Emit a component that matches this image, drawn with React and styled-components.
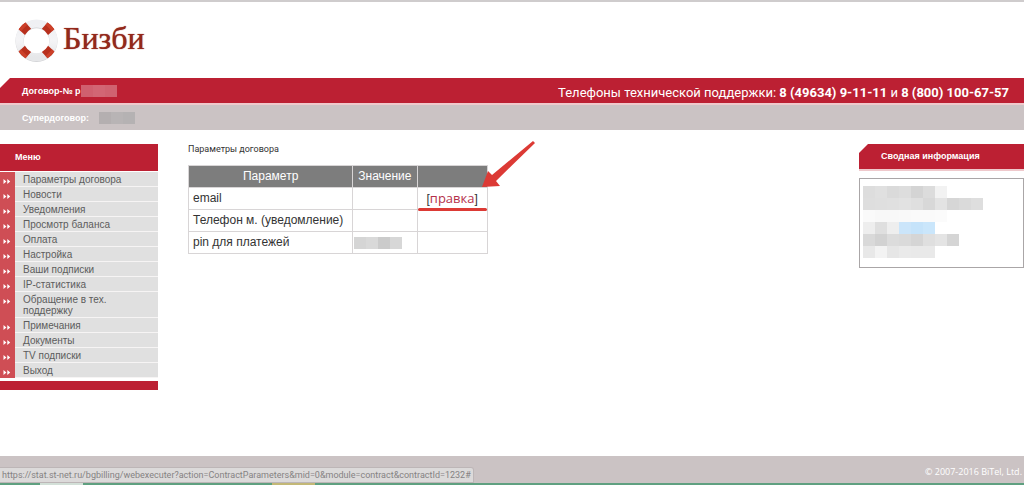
import React from 'react';
import styled, { createGlobalStyle, ThemeProvider } from 'styled-components';

const theme = {
    colors: {
        red: '#bc2033',
        redLight: '#cf4e55',
        pink: '#efc9cc',
        taupe: '#cbc3c4',
        item: '#e0e0e0',
        tableHead: '#7d7d7d',
        border: '#d8d5d6',
        mark: '#dc3a35',
        green: '#5fa080',
    },
    fonts: {
        base: '"Liberation Sans", Arial, sans-serif',
        small: 'Roboto, "Liberation Sans", sans-serif',
        logo: '"Liberation Serif", "Times New Roman", serif',
        wide: '"Open Sans", "Noto Sans", sans-serif',
    },
};

const GlobalStyle = createGlobalStyle`
  * {
    box-sizing: border-box;
  }

  body {
    margin: 0;
    background: white;
    color: #333;
    font-family: ${props => props.theme.fonts.base};
    font-size: 14px;
  }
`;

const Page = styled.div`
  display: flex;
  flex-direction: column;
  min-height: 100vh;
`;

const Header = styled.header`
  display: flex;
  align-items: center;
  height: 78px;
  padding: 0 14px;
  border-top: 2px solid #cfcccd;
`;

const Logo = styled.a`
  display: flex;
  align-items: center;
  gap: 4px;
  color: #93281a;
  font-family: ${props => props.theme.fonts.logo};
  font-size: 32px;
  line-height: 40px;
  text-decoration: none;
  text-shadow: 0 0 1px #93281a;
`;

const LogoText = styled.span`
  padding-bottom: 4px;
`;

const TopBar = styled.div`
  display: flex;
  align-items: center;
  justify-content: space-between;
  height: 25px;
  padding: 0 15px 0 22px;
  background: ${props => props.theme.colors.red};
  clip-path: polygon(10px 0, 100% 0, 100% 100%, 0 100%, 0 10px);
  color: white;
`;

const SubBar = styled.div`
  display: flex;
  align-items: center;
  height: 27px;
  padding: 0 22px;
  background: ${props => props.theme.colors.taupe};
  border-top: 2px solid ${props => props.theme.colors.pink};
  color: white;
`;

const BarLabel = styled.div`
  display: flex;
  align-items: center;
  gap: ${props => props.$gap || '0'};
  font-size: 9px;
  font-weight: bold;
`;

const Phones = styled.div`
  padding-top: 4px;
  font-family: ${props => props.theme.fonts.small};
  font-size: 13px;
`;

const Mosaic = styled.span`
  display: flex;
  flex-direction: column;
`;

const MosaicRow = styled.span`
  display: flex;
`;

const MosaicCell = styled.span`
  width: 12px;
  height: 12px;
  background: ${props => props.$color};
`;

const Content = styled.div`
  display: grid;
  grid-template-columns: 158px 1fr 165px;
  gap: 30px;
  align-items: start;
  flex: 1;
  padding: 14px 0;
`;

const Menu = styled.nav`
  border-bottom: 9px solid ${props => props.theme.colors.red};
`;

const MenuTitle = styled.h2`
  margin: 0 0 1px;
  padding: 0 15px;
  background: ${props => props.theme.colors.red};
  color: white;
  font-size: 9px;
  line-height: 27px;
`;

const MenuList = styled.ul`
  margin: 0;
  padding: 0 0 3px;
  list-style: none;
`;

const MenuItem = styled.li`
  display: flex;
  background: ${props => props.theme.colors.redLight};
`;

const Marker = styled.span`
  display: flex;
  justify-content: center;
  width: 15px;
  padding: 7px 1px 0 0;
`;

const MenuLink = styled.a`
  flex: 1;
  padding: 2px 30px 1px 8px;
  background: ${props => props.theme.colors.item};
  border-bottom: 1px solid #f6f4f4;
  color: #5c5c5c;
  font-size: 10px;
  line-height: 11px;
  text-decoration: none;

  &:hover {
    color: ${props => props.theme.colors.red};
  }
`;

const PageTitle = styled.h1`
  margin: 0 0 10px;
  font-family: ${props => props.theme.fonts.small};
  font-size: 9px;
  font-weight: normal;
  line-height: 11px;
`;

const Table = styled.table`
  border-collapse: collapse;
  color: #333;
`;

const HeadCell = styled.th`
  height: 22px;
  padding: 0 5px;
  background: ${props => props.theme.colors.tableHead};
  border: 1px solid ${props => props.theme.colors.border};
  color: white;
  font-size: 12px;
  font-weight: normal;
  line-height: 15px;
`;

const Cell = styled.td`
  position: relative;
  height: 22px;
  padding: ${props => props.$center ? '0 9px' : '0 9px 0 4px'};
  border: 1px solid ${props => props.theme.colors.border};
  font-size: 12px;
  line-height: 15px;
  text-align: ${props => props.$center ? 'center' : 'left'};
`;

const ValueCell = styled(Cell)`
  padding: 0 1px;
`;

const EditLink = styled.a`
  color: #b5304a;
  font-family: ${props => props.theme.fonts.wide};
  font-size: 13px;
  text-decoration: none;
`;

const Underline = styled.span`
  position: absolute;
  right: 0;
  bottom: -2px;
  left: 0;
  height: 3px;
  border-radius: 2px;
  background: ${props => props.theme.colors.mark};
`;

const Arrow = styled.svg`
  position: absolute;
  bottom: 20px;
  left: 64px;
  width: 56px;
  height: 50px;
`;

const MainArea = styled.main`
  min-width: 0;
`;

const SummaryTitle = styled.h2`
  margin: 0 0 7px;
  padding: 0 22px;
  background: ${props => props.theme.colors.red};
  border-bottom: 2px solid ${props => props.theme.colors.pink};
  clip-path: polygon(9px 0, 100% 0, 100% 100%, 0 100%, 0 9px);
  color: white;
  font-size: 9px;
  line-height: 25px;
`;

const SummaryBox = styled.div`
  height: 90px;
  padding: 7px 3px;
  border: 1px solid #aaa6a7;
`;

const Footer = styled.footer`
  position: relative;
  display: flex;
  align-items: center;
  justify-content: flex-end;
  height: 29px;
  padding: 4px 2px 0;
  background: ${props => props.theme.colors.taupe};
  border-bottom: 2px solid ${props => props.theme.colors.green};
  color: white;
  font-family: ${props => props.theme.fonts.wide};
  font-size: 9px;
`;

const StatusBar = styled.div`
  position: absolute;
  bottom: 0;
  left: 0;
  padding: 0 2px;
  background: #dcdada;
  border: 1px solid #bdb6b7;
  border-left: 0;
  border-radius: 0 3px 0 0;
  color: #858283;
  font-family: ${props => props.theme.fonts.small};
  font-size: 9px;
  line-height: 14px;
`;

const TaskMark = styled.span`
  position: absolute;
  top: 100%;
  left: ${props => props.$left};
  width: 43px;
  height: 2px;
  background: ${props => props.$color};
`;

const menuItems = [
    'Параметры договора',
    'Новости',
    'Уведомления',
    'Просмотр баланса',
    'Оплата',
    'Настройка',
    'Ваши подписки',
    'IP-статистика',
    'Обращение в тех. поддержку',
    'Примечания',
    'Документы',
    'TV подписки',
    'Выход',
];

const summaryCells = [
    ['#dddddd', '#e0e0e0', '#dadada', '#dddddd', '#d4d4d4', '#dcdcdc', '#f2f2f2'],
    ['#dedede', '#dfdfdf', '#e0e0e0', '#e2e2e2', '#dfdfdf', '#d8d8d8', '#e3e3e3', '#d6d6d6', '#dadada', '#dedede'],
    ['#fafafa', '#f8f8f8', '#f8f8f8', '#f9f9f9', '#fafafa', '#fafafa', '#fbfbfb'],
    ['#eeeeee', '#dfdfdf', '#eeeeee', '#cbe5fa', '#c5e3fa', '#cae6fb'],
    ['#d9d9d9', '#d2d2d2', '#dcdcdc', '#dadada', '#d5d5d5', '#dfdfdf', '#e4e4e4', '#d5d5d5'],
    ['#e8e8e8', '#f3f3f3', '#e6e6e6', '#eaeaea', '#e9e9e9', '#e9e9e9'],
];

const valueCells = [['#d5d5d5', '#d9d9d9', '#cbcbcb', '#d7d7d7']];
const contractCells = [['#d0606f', '#d26674', '#d06270']];
const superCells = [['#b4afb0', '#b8b4b5', '#b5b2b3']];

const Pixels = ({ rows }) => (
    <Mosaic>
        {rows.map((row, rowIndex) => (
            <MosaicRow key={rowIndex}>
                {row.map((color, index) => (
                    <MosaicCell key={index} $color={color} />
                ))}
            </MosaicRow>
        ))}
    </Mosaic>
);

const Lifebuoy = () => (
    <svg width="45" height="45" viewBox="0 0 45 45" aria-hidden="true">
        <defs>
            <linearGradient id="ring" x1="0" y1="0" x2="0" y2="1">
                <stop offset="0" stopColor="#eff0f3" />
                <stop offset="0.5" stopColor="#f4f4f6" />
                <stop offset="1" stopColor="#e6e7e9" />
            </linearGradient>
        </defs>
        <circle cx="22.5" cy="23" r="16.9" fill="none" stroke="#cfd0d3" strokeWidth="8.2" />
        <circle cx="22.5" cy="22.4" r="16.9" fill="none" stroke="url(#ring)" strokeWidth="8" />
        {[45, 135, 225, 315].map(angle => (
            <g key={angle} transform={`rotate(${angle} 22.5 22.4)`}>
                <path d="M17.7 2Q22.5 0.8 27.3 2L26.9 10.4Q22.5 9.2 18.1 10.4Z" fill="#b8301d" />
                <path d="M17.9 5L17.7 2Q22.5 0.8 27.3 2L27.1 5Z" fill="#cc4029" />
            </g>
        ))}
    </svg>
);

const App = () => {
    return (
        <ThemeProvider theme={theme}>
            <GlobalStyle />
            <Page>
                <Header>
                    <Logo href="#">
                        <Lifebuoy />
                        <LogoText>Бизби</LogoText>
                    </Logo>
                </Header>

                <TopBar>
                    <BarLabel>
                        Договор-№ р
                        <Pixels rows={contractCells} />
                    </BarLabel>
                    <Phones>
                        Телефоны технической поддержки: <b>8 (49634) 9-11-11</b> и <b>8 (800) 100-67-57</b>
                    </Phones>
                </TopBar>
                <SubBar>
                    <BarLabel $gap="10px">
                        Супердоговор:
                        <Pixels rows={superCells} />
                    </BarLabel>
                </SubBar>

                <Content>
                    <Menu>
                        <MenuTitle>Меню</MenuTitle>
                        <MenuList>
                            {menuItems.map(item => (
                                <MenuItem key={item}>
                                    <Marker>
                                        <svg width="8" height="5" viewBox="0 0 8 5" aria-hidden="true">
                                            <path d="M0.5 0L3.4 2.5L0.5 5ZM4.3 0L7.2 2.5L4.3 5Z" fill="white" />
                                        </svg>
                                    </Marker>
                                    <MenuLink href="#">{item}</MenuLink>
                                </MenuItem>
                            ))}
                        </MenuList>
                    </Menu>

                    <MainArea>
                        <PageTitle>Параметры договора</PageTitle>
                        <Table>
                            <thead>
                                <tr>
                                    <HeadCell>Параметр</HeadCell>
                                    <HeadCell>Значение</HeadCell>
                                    <HeadCell />
                                </tr>
                            </thead>
                            <tbody>
                                <tr>
                                    <Cell>email</Cell>
                                    <ValueCell />
                                    <Cell $center>
                                        [<EditLink href="#">правка</EditLink>]
                                        <Underline />
                                        <Arrow viewBox="0 0 56 50" aria-hidden="true">
                                            <path d="M51 2L53 4L14 42L18 47L0 48L6 32L10 36Z" fill="#dc3a35" />
                                        </Arrow>
                                    </Cell>
                                </tr>
                                <tr>
                                    <Cell>Телефон м. (уведомление)</Cell>
                                    <ValueCell />
                                    <Cell />
                                </tr>
                                <tr>
                                    <Cell>pin для платежей</Cell>
                                    <ValueCell>
                                        <Pixels rows={valueCells} />
                                    </ValueCell>
                                    <Cell />
                                </tr>
                            </tbody>
                        </Table>
                    </MainArea>

                    <aside>
                        <SummaryTitle>Сводная информация</SummaryTitle>
                        <SummaryBox>
                            <Pixels rows={summaryCells} />
                        </SummaryBox>
                    </aside>
                </Content>

                <Footer>
                    © 2007-2016 BiTel, Ltd.
                    <StatusBar>
                        https://stat.st-net.ru/bgbilling/webexecuter?action=ContractParameters&amp;mid=0&amp;module=contract&amp;contractId=1232#
                    </StatusBar>
                    <TaskMark $left="40px" $color="#d3e0d8" />
                    <TaskMark $left="272px" $color="#c3b877" />
                </Footer>
            </Page>
        </ThemeProvider>
    );
};

export default App;
